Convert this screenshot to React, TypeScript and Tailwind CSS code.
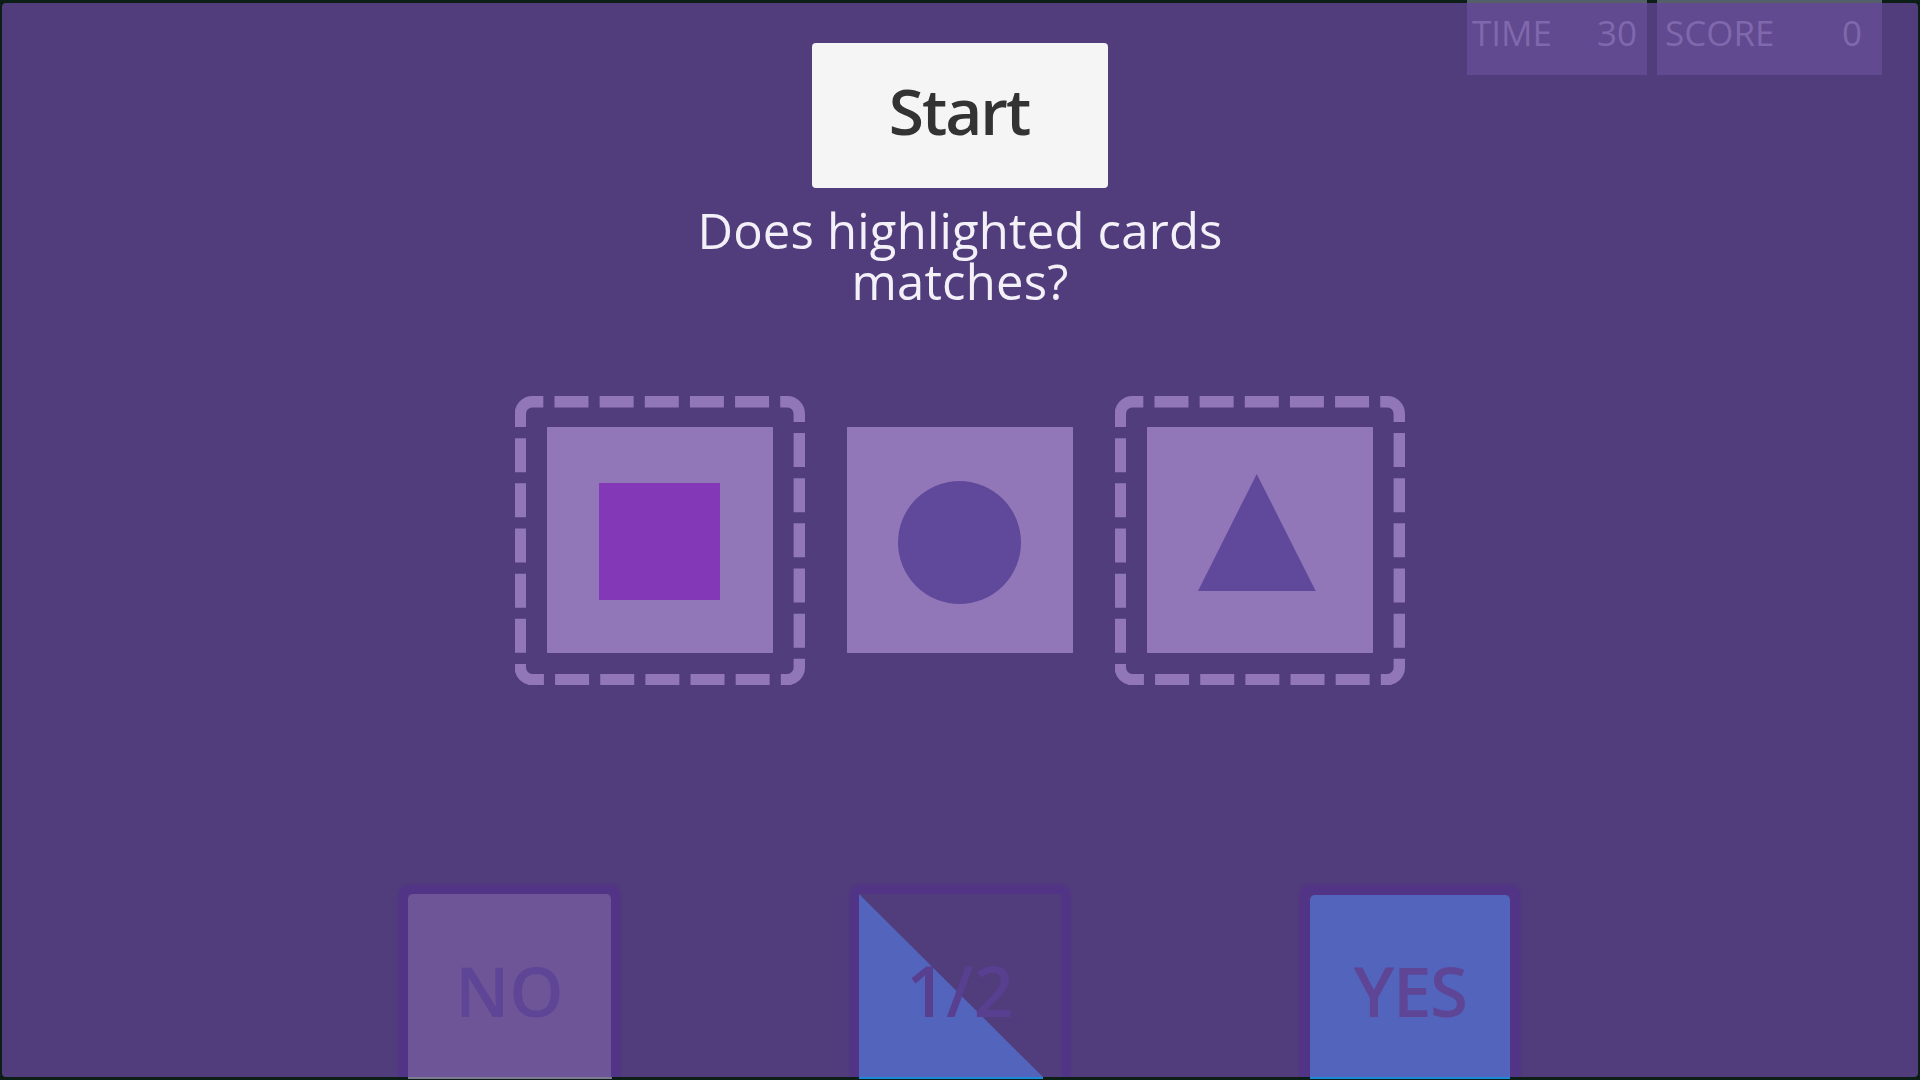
import type { ReactNode } from "react";

export default function App() {
  return (
    <div className="flex h-[1080px] w-[1920px] flex-col overflow-hidden bg-[#0c1f16] px-[2px]" style={{ fontFamily: '"Open Sans", sans-serif' }}>
      <div className="flex h-[3px] shrink-0 pl-[1465px]">
        <div className="w-[180px] bg-[#56606a]" />
        <div className="ml-[10px] w-[225px] bg-[#56606a]" />
      </div>
      <div className="flex min-h-0 flex-1 flex-col overflow-hidden rounded-[4px] bg-[#513c7c]">
        <div className="grid grid-cols-[1fr_auto_1fr]">
          <div />
          <div className="pt-[40px]">
            <div className="flex h-[145px] w-[296px] items-center justify-center rounded-[4px] bg-[#f5f5f5] pb-[9px] pr-[2px] text-[64px] font-semibold tracking-[-2px] text-[#333333]">Start</div>
          </div>
          <div className="flex items-start justify-end gap-[10px] pr-[36px]">
            <Stat label="TIME" value="30" box="w-[180px] pl-[5px] pr-[10px]" />
            <Stat label="SCORE" value="0" box="w-[225px] pl-[8px] pr-[20px]" />
          </div>
        </div>
        <div className="mt-[17px] text-center text-[49px] leading-[51px] tracking-[0.2px] text-[#f3f0f8]">
          Does highlighted cards
          <br />
          matches?
        </div>
        <div className="mt-[88px] flex items-center justify-center">
          <Framed>
            <div className="h-[117px] w-[121px] translate-x-[-1px] translate-y-[1px] bg-[#8338b8]" />
          </Framed>
          <div className="mx-[42px]">
            <Card>
              <div className="h-[123px] w-[123px] translate-x-[-1px] translate-y-[2px] rounded-full bg-[#60499b]" />
            </Card>
          </div>
          <Framed>
            <svg width="118" height="117" viewBox="0 0 118 117" className="translate-x-[-3px] translate-y-[-8px]">
              <path d="M58.7 0 L117.7 117 L0 117 Z" fill="#60499b" />
            </svg>
          </Framed>
        </div>
        <div className="mt-[200px] flex justify-center gap-[230px] pr-[1px]">
          <Answer box="w-[221px] border-[9px]">
            <div className="flex h-[220px] items-center justify-center rounded-t-[5px] bg-[#6d5598] pb-[27px] text-[69px] font-semibold text-[#5e4596]">NO</div>
          </Answer>
          <Answer box="w-[220px] border-[9px]">
            <div className="relative flex h-[220px] items-center justify-center pb-[27px] text-[70px] font-semibold text-[#593f8f]">
              <svg width="202" height="220" viewBox="0 0 202 220" className="absolute inset-0">
                <path d="M0 0 L184 183 L0 183 Z" fill="#5264bc" />
              </svg>
              <span className="relative">1/2</span>
            </div>
          </Answer>
          <Answer box="w-[220px] border-[10px]">
            <div className="flex h-[220px] items-center justify-center rounded-t-[5px] bg-[#5264bc] pb-[29px] text-[69px] font-semibold tracking-[-1.5px] text-[#5f4596]">YES</div>
          </Answer>
        </div>
      </div>
      <div className="flex h-[3px] shrink-0 pb-[1px] pl-[406px]">
        <div className="w-[204px] bg-[#7f7a94]" />
        <div className="ml-[247px] w-[184px] bg-[#1c88d8]" />
        <div className="ml-[267px] w-[200px] bg-[#1c88d8]" />
      </div>
    </div>
  );
}

function Stat({ label, value, box }: { label: string; value: string; box: string }) {
  return (
    <div className={`flex h-[72px] items-start justify-between bg-[#614a90] pt-[6px] text-[35px] font-medium leading-[48px] text-[#8068ad] ${box}`}>
      <span>{label}</span>
      <span>{value}</span>
    </div>
  );
}

function Card({ children }: { children: ReactNode }) {
  return <div className="flex h-[226px] w-[226px] items-center justify-center bg-[#9177b7]">{children}</div>;
}

function Framed({ children }: { children: ReactNode }) {
  return (
    <div className="relative flex h-[290px] w-[290px] items-center justify-center">
      <svg width="290" height="290" viewBox="0 0 290 290" className="absolute inset-0">
        <path
          d="M8.8 10.2 A12 12 0 0 1 17.3 6.7 H272.3 A12 12 0 0 1 284.3 18.7 V272.6 A12 12 0 0 1 272.3 284.6 H17.3 A12 12 0 0 1 5.3 272.6 V18.7 A12 12 0 0 1 8.8 10.2 Z"
          fill="none"
          stroke="#9177b7"
          strokeWidth="11.4"
          strokeDasharray="34 11.15"
          strokeDashoffset="13.6"
        />
      </svg>
      <Card>{children}</Card>
    </div>
  );
}

function Answer({ children, box }: { children: ReactNode; box: string }) {
  return <div className={`shrink-0 rounded-t-[10px] border-[#523486] shadow-[0_0_3px_#523486] ${box}`}>{children}</div>;
}
